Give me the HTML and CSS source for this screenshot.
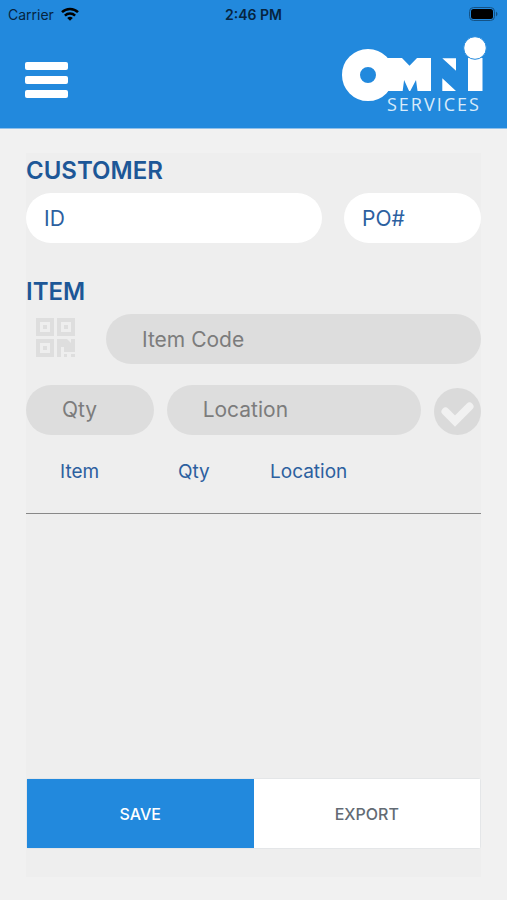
FILE: index.html
```html
<!DOCTYPE html>
<html lang="en">
<head>
  <meta charset="UTF-8">
  <meta name="viewport" content="width=device-width, initial-scale=1.0">
  <title>Omni Services</title>
  <link rel="stylesheet" href="styles.css">
</head>
<body>
  <header class="header">
    <div class="status">
      <div class="carrier">
        <span>Carrier</span>
        <svg class="wifi" viewBox="0 0 18 14" aria-hidden="true">
          <path d="M1 5.200a11.400 11.400 0 0 1 16 0M3.900 8.600a7.300 7.300 0 0 1 10.200 0" />
          <path class="dot" d="M9 13.800L6.200 11a4 4 0 0 1 5.600 0z" />
        </svg>
      </div>
      <span class="time">2:46 PM</span>
      <svg class="battery" viewBox="0 0 30 14" aria-hidden="true">
        <rect class="case" x="0.500" y="0.500" width="25" height="13" rx="4" />
        <rect x="2" y="2" width="22" height="10" rx="2.500" />
        <path class="cap" d="M27 4.500q3 2.500 0 5z" />
      </svg>
    </div>
    <div class="navbar">
      <button class="menu" type="button" aria-label="Menu">
        <svg viewBox="0 0 43 36" aria-hidden="true">
          <rect width="43" height="8" rx="2" />
          <rect y="14" width="43" height="8" rx="2" />
          <rect y="28" width="43" height="8" rx="2" />
        </svg>
      </button>
      <svg class="logo" viewBox="0 0 146 76" role="img" aria-label="Omni Services">
        <circle class="ring" cx="26" cy="38" r="17" />
        <rect x="44" y="21" width="45" height="33" />
        <path class="notch" d="M59.500 20.500h16l-8 8.200zM60.600 54.500l1.500-11.500 5.200 11.500zM68 54.500l6-11.500 1.600 11.500z" />
        <path d="M100.300 21.300h13.700v12.500zM100.300 41.300l13.700 12.700h-13.700z" />
        <rect x="126" y="21" width="14.500" height="33" />
        <circle class="tittle" cx="133" cy="11" r="11.300" />
        <text x="45" y="74">SERVICES</text>
      </svg>
    </div>
  </header>

  <main class="main">
    <form class="form">
      <h2>CUSTOMER</h2>
      <div class="row customer">
        <input type="text" placeholder="ID" aria-label="ID">
        <input type="text" placeholder="PO#" aria-label="PO#">
      </div>

      <h2>ITEM</h2>
      <div class="row item">
        <button class="scan" type="button" aria-label="Scan code">
          <svg viewBox="0 0 39 39" aria-hidden="true">
            <path fill-rule="evenodd" d="M0 0h18v18H0zM4 4v10h10V4zM21 0h18v18H21zM25 4v10h10V4zM0 21h18v18H0zM4 25v10h10V25z" />
            <path d="M7 7h4v4H7zM28 7h4v4h-4zM7 28h4v4H7zM21 21h10l4 4v-4h4v13h-11v-5h-3v10h-4zM28 36h3v3h-3zM35 36h4v3h-4z" />
          </svg>
        </button>
        <input class="gray" type="text" placeholder="Item Code" aria-label="Item Code">
      </div>
      <div class="row detail">
        <input class="gray" type="text" placeholder="Qty" aria-label="Qty">
        <input class="gray" type="text" placeholder="Location" aria-label="Location">
        <button class="add" type="button" aria-label="Add item">
          <svg viewBox="0 0 47 47" aria-hidden="true">
            <circle cx="23.500" cy="23.500" r="23.500" />
            <path d="M11.500 23.500l9.500 9.500L35.500 18.500" />
          </svg>
        </button>
      </div>

      <table class="items">
        <thead>
          <tr>
            <th class="col-item">Item</th>
            <th class="col-qty">Qty</th>
            <th>Location</th>
          </tr>
        </thead>
      </table>

      <div class="actions">
        <button class="save" type="submit">SAVE</button>
        <button class="export" type="button">EXPORT</button>
      </div>
    </form>
  </main>
</body>
</html>
```

FILE: styles.css
```css
* {
  box-sizing: border-box;
}
body {
  display: flex;
  flex-direction: column;
  min-height: 100vh;
  margin: 0;
  background: #f1f1f1;
  color: #1d5797;
  font-family: Inter, "Liberation Sans", sans-serif;
}
button {
  padding: 0;
  border: none;
  background: none;
  cursor: pointer;
}
svg {
  display: block;
}

.header {
  border-bottom: 1px solid #8fc0ea;
  background: #2289dd;
}
.status {
  display: grid;
  grid-template-columns: 1fr auto 1fr;
  align-items: center;
  height: 28px;
  padding: 0 8px;
  color: #06243f;
  font-size: 14px;
}
.carrier {
  display: flex;
  align-items: center;
  gap: 7px;
}
.wifi {
  width: 18px;
  height: 14px;
  fill: none;
  stroke: #000;
  stroke-width: 2.5;
}
.wifi .dot {
  fill: #000;
  stroke: none;
}
.time {
  font-weight: 600;
}
.battery {
  justify-self: end;
  width: 30px;
  height: 14px;
}
.battery .case {
  fill: none;
  stroke: #145285;
}
.battery .cap {
  fill: #145285;
}

.navbar {
  display: flex;
  align-items: flex-start;
  justify-content: space-between;
  height: 100px;
  padding: 9px 19px 0 25px;
}
.menu {
  margin-top: 25px;
}
.menu svg {
  width: 43px;
  height: 36px;
  fill: #fff;
}
.logo {
  width: 146px;
  height: 76px;
  overflow: visible;
  fill: #fff;
}
.logo .ring {
  fill: none;
  stroke: #fff;
  stroke-width: 18;
}
.logo .notch {
  fill: #2289dd;
}
.logo .tittle {
  stroke: #2289dd;
  stroke-width: 1;
}
.logo text {
  fill: #d8ebfa;
  font-family: "Open Sans", "Noto Sans", sans-serif;
  font-size: 18px;
  letter-spacing: 2px;
}

.main {
  display: flex;
  flex: 1;
  padding: 24px 26px 23px;
}
.form {
  display: flex;
  flex: 1;
  flex-direction: column;
  min-width: 0;
  background: #eee;
}
h2 {
  margin: 0;
  padding: 3px 0 7px;
  font-size: 24px;
  font-weight: 600;
  line-height: 30px;
}
.row {
  display: grid;
  align-items: center;
}
.customer {
  grid-template-columns: 296fr 137fr;
  gap: 22px;
  margin-bottom: 31px;
}
.item {
  grid-template-columns: 58px 1fr;
  gap: 22px;
  margin-bottom: 20px;
}
.detail {
  grid-template-columns: 128fr 255fr 47px;
  gap: 13px;
}
input {
  width: 100%;
  min-width: 0;
  height: 50px;
  padding: 0 18px;
  border: none;
  border-radius: 25px;
  outline: none;
  background: #fff;
  color: #1d5797;
  font-family: inherit;
  font-size: 21px;
}
input::placeholder {
  color: #2c609f;
  opacity: 1;
}
input.gray {
  padding: 0 36px;
  background: #ddd;
}
input.gray::placeholder {
  color: #7c7c7c;
}
.scan {
  padding-bottom: 4px;
}
.scan svg {
  width: 39px;
  height: 39px;
  margin: 0 auto;
  fill: #dedede;
}
.add {
  padding-top: 4px;
}
.add svg {
  width: 47px;
  height: 47px;
}
.add circle {
  fill: #dadada;
}
.add path {
  fill: none;
  stroke: #f1f1f1;
  stroke-width: 8;
  stroke-linecap: round;
}

.items {
  width: 100%;
  border-collapse: collapse;
  table-layout: fixed;
}
.items th {
  height: 78px;
  padding: 0 0 4px;
  border-bottom: 1px solid #888;
  color: #2c609f;
  font-size: 19px;
  font-weight: 400;
  text-align: left;
}
.items .col-item {
  width: 152px;
  padding-left: 34px;
}
.items .col-qty {
  width: 92px;
}

.actions {
  display: grid;
  grid-template-columns: 1fr 1fr;
  height: 71px;
  margin: auto 0 28px;
  border: 1px solid #e4e6e8;
  border-radius: 3px;
}
.actions button {
  font-family: inherit;
  font-size: 16px;
  font-weight: 500;
}
.save {
  background: #2289dd;
  color: #fff;
}
.export {
  background: #fff;
  color: #636b74;
}
```
